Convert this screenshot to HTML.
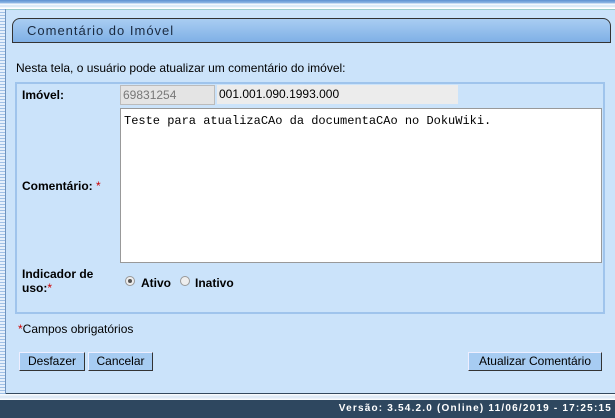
<!DOCTYPE html>
<html><head><meta charset="utf-8"><style>
body{margin:0;width:615px;height:418px;overflow:hidden;background:#fff;font-family:"Liberation Sans",Arial,sans-serif;font-size:12px;position:relative}
.top{position:absolute;left:0;top:0;width:615px;height:9px;background:linear-gradient(#5b8fd0 0,#8fb8e6 3px,#fff 4px,#cfe2f6 6px,#fff 8px)}
.left{position:absolute;left:0;top:9px;width:5px;height:386px;background:repeating-linear-gradient(#9fc0e6 0,#9fc0e6 1px,#e6f0fb 1px,#e6f0fb 3px);border-right:1px solid #6f93bd}
.panel{position:absolute;left:6px;top:9px;width:609px;height:383px;background:#cbe3fa;border-top:1px solid #9cc;border-bottom:1px solid #34495e}
.tab{position:absolute;left:12px;top:18px;width:597px;height:23px;border:1px solid #333;border-radius:8px 8px 0 0;background:linear-gradient(#a9cdf2,#7fb0e6);}
.tab span{position:absolute;left:14px;top:4px;font-size:13px;letter-spacing:1px;color:#1a2a40}
.intro{position:absolute;left:16px;top:61px;}
.fs{position:absolute;left:15px;top:82px;width:586px;height:228px;border:2px solid #9fc4ec}
.lbl{position:absolute;font-weight:bold;color:#000}
.req{color:#c00;font-weight:normal}
.in1{position:absolute;left:120px;top:85px;background:#e4e4e4;border:1px solid #bbb;color:#777;font-size:12px;line-height:18px;padding-left:2px;box-sizing:border-box;width:95px;height:20px}
.in2{position:absolute;left:217px;top:85px;width:241px;height:19px;background:#ececec;line-height:19px;padding-left:2px;box-sizing:border-box;font-size:12px}
.ta{position:absolute;left:120px;top:108px;width:482px;height:155px;background:#fff;border:1px solid #999;box-sizing:border-box;font-family:"Liberation Mono",monospace;font-size:12px;padding:5px 3px}
.rad{position:absolute;top:276px;width:10px;height:10px;border-radius:50%;border:1px solid #999;background:#eee;box-sizing:border-box}
.btn{position:absolute;top:352px;height:19px;background:#a7ccf2;border:1px solid #333;border-top-color:#eef;border-left-color:#eef;box-sizing:border-box;font-size:12px;line-height:17px;text-align:center}
.foot{position:absolute;left:0;top:400px;width:615px;height:18px;background:#2e475f;color:#fff;font-weight:bold;font-size:10px;letter-spacing:1.2px;text-align:right;line-height:18px;}
.foot span{padding-right:3px}
.sep{position:absolute;left:0;top:394px;width:615px;height:6px;background:linear-gradient(#fff,#d8e6f4,#fff)}
</style></head><body>
<div class="top"></div>
<div class="left"></div>
<div class="panel"></div>
<div class="tab"><span>Comentário do Imóvel</span></div>
<div class="intro">Nesta tela, o usuário pode atualizar um comentário do imóvel:</div>
<div class="fs"></div>
<div class="lbl" style="left:22px;top:88px">Imóvel:</div>
<div class="in1">69831254</div>
<div class="in2">001.001.090.1993.000</div>
<div class="ta">Teste para atualizaCAo da documentaCAo no DokuWiki.</div>
<div class="lbl" style="left:22px;top:179px">Comentário: <span class="req">*</span></div>
<div class="lbl" style="left:22px;top:267px;line-height:14px">Indicador de<br>uso:<span class="req">*</span></div>
<div class="rad" style="left:125px"><div style="width:4px;height:4px;border-radius:50%;background:#555;margin:2px"></div></div>
<div class="lbl" style="left:141px;top:276px">Ativo</div>
<div class="rad" style="left:180px"></div>
<div class="lbl" style="left:195px;top:276px">Inativo</div>
<div style="position:absolute;left:18px;top:322px"><span style="color:#c00">*</span>Campos obrigatórios</div>
<div class="btn" style="left:19px;width:66px">Desfazer</div>
<div class="btn" style="left:88px;width:65px">Cancelar</div>
<div class="btn" style="left:468px;width:134px">Atualizar Comentário</div>
<div class="sep"></div>
<div class="foot"><span>Versão: 3.54.2.0 (Online) 11/06/2019 - 17:25:15</span></div>
</body></html>
